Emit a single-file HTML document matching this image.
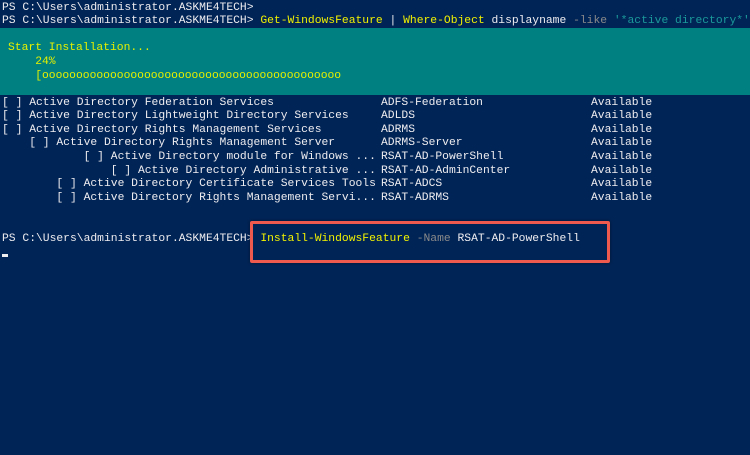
<!DOCTYPE html>
<html><head><meta charset="utf-8"><style>
html,body{margin:0;padding:0;}
body{width:750px;height:455px;background:#012456;overflow:hidden;position:relative;font-family:"Liberation Mono",monospace;font-size:11.33px;color:#eeedf0;}
.l{position:absolute;left:2px;height:13.6px;line-height:13.6px;white-space:pre;margin-top:1.5px;}
.y{color:#f2f200}.g{color:#8a8a8a}.t{color:#1a9a9a}
#band{position:absolute;left:0;top:27.5px;width:750px;height:67.5px;background:#008080;}
.bt{color:#e6f000}
#box{position:absolute;left:250px;top:221px;width:354px;height:36px;border:3px solid #ee5a4d;border-radius:2px;box-shadow:0 0 3px rgba(0,0,0,.4);}
#cur{position:absolute;left:2px;top:254px;width:6px;height:3px;background:#eeedf0;}
</style></head><body>
<div class="l" style="top:0">PS C:\Users\administrator.ASKME4TECH&gt;</div>
<div class="l" style="top:13.6px">PS C:\Users\administrator.ASKME4TECH&gt; <span class="y">Get-WindowsFeature</span> | <span class="y">Where-Object</span> displayname <span class="g">-like</span> <span class="t">'*active directory*'</span></div>
<div id="band"></div>
<div class="l bt" style="top:40.8px;left:8px">Start Installation...</div>
<div class="l bt" style="top:54.4px;left:8px">    24%</div>
<div class="l bt" style="top:68px;left:8px">    [oooooooooooooooooooooooooooooooooooooooooooo</div>

<div class="l" style="top:95px">[ ] Active Directory Federation Services</div>
<div class="l" style="top:95px;left:381px">ADFS-Federation</div>
<div class="l" style="top:95px;left:591px">Available</div>

<div class="l" style="top:108.6px">[ ] Active Directory Lightweight Directory Services</div>
<div class="l" style="top:108.6px;left:381px">ADLDS</div>
<div class="l" style="top:108.6px;left:591px">Available</div>

<div class="l" style="top:122.2px">[ ] Active Directory Rights Management Services</div>
<div class="l" style="top:122.2px;left:381px">ADRMS</div>
<div class="l" style="top:122.2px;left:591px">Available</div>

<div class="l" style="top:135.8px">    [ ] Active Directory Rights Management Server</div>
<div class="l" style="top:135.8px;left:381px">ADRMS-Server</div>
<div class="l" style="top:135.8px;left:591px">Available</div>

<div class="l" style="top:149.4px">            [ ] Active Directory module for Windows ...</div>
<div class="l" style="top:149.4px;left:381px">RSAT-AD-PowerShell</div>
<div class="l" style="top:149.4px;left:591px">Available</div>

<div class="l" style="top:163px">                [ ] Active Directory Administrative ...</div>
<div class="l" style="top:163px;left:381px">RSAT-AD-AdminCenter</div>
<div class="l" style="top:163px;left:591px">Available</div>

<div class="l" style="top:176.6px">        [ ] Active Directory Certificate Services Tools</div>
<div class="l" style="top:176.6px;left:381px">RSAT-ADCS</div>
<div class="l" style="top:176.6px;left:591px">Available</div>

<div class="l" style="top:190.2px">        [ ] Active Directory Rights Management Servi...</div>
<div class="l" style="top:190.2px;left:381px">RSAT-ADRMS</div>
<div class="l" style="top:190.2px;left:591px">Available</div>

<div class="l" style="top:231px">PS C:\Users\administrator.ASKME4TECH&gt; <span class="y">Install-WindowsFeature</span> <span class="g">-Name</span> RSAT-AD-PowerShell</div>
<div id="cur"></div>
<div id="box"></div>
</body></html>
